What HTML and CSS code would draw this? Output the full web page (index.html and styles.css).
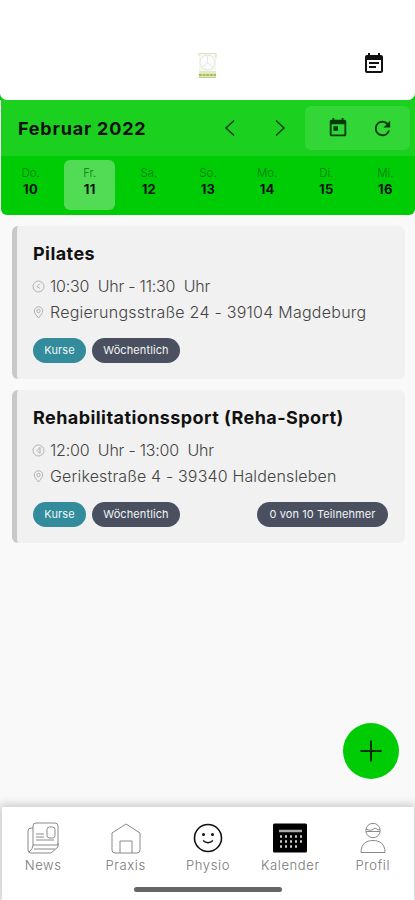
FILE: index.html
```html
<!DOCTYPE html>
<html lang="de">

<head>
    <meta charset="UTF-8">
    <meta name="viewport" content="width=device-width, initial-scale=1.0">
    <title>Kalender</title>
    <link rel="stylesheet" href="styles.css">
</head>

<body>
    <header class="top-bar">
        <svg class="logo" width="20" height="28" viewBox="0 0 20 28">
            <rect x="1" y="1" width="17" height="25" fill="#f7f8f2"/>
            <path d="M1 4V1.500H18V6" fill="none" stroke="#d8e1b8"/>
            <path d="M7 3.500H12" stroke="#9aa88b"/>
            <circle cx="9.500" cy="10.500" r="7.500" fill="#fcfcfc" stroke="#e4e4e0"/>
            <path d="M9.500 4V11L4 15M9.500 11L15 15" fill="none" stroke="#e6e6ec"/>
            <path d="M1 19H18V26H1Z" fill="#e1eac0"/>
            <path d="M1 23H18" stroke="#a5bd5c" stroke-width="2" stroke-dasharray="3 .6"/>
            <path d="M1 25.500H18" stroke="#bdcf83"/>
        </svg>
        <svg class="events-icon" width="24" height="24" viewBox="0 0 24 24">
            <path fill="#111" d="M17 10H7v2h10v-2zm2-7h-1V1h-2v2H8V1H6v2H5c-1.110 0-2 .9-2 2v14c0 1.100.89 2 2 2h14c1.100 0 2-.9 2-2V5c0-1.100-.9-2-2-2zm0 16H5V8h14v11zm-5-5H7v2h7v-2z"/>
        </svg>
    </header>

    <section class="calendar">
        <div class="month-row">
            <h1>Februar 2022</h1>
            <svg class="prev" width="12" height="18" viewBox="0 0 12 18"><path d="M10 1.500L2 9l8 7.500"/></svg>
            <svg class="next" width="12" height="18" viewBox="0 0 12 18"><path d="M2 1.500L10 9l-8 7.500"/></svg>
            <div class="tools">
                <svg width="22" height="22" viewBox="0 0 24 24"><path d="M19 3h-1V1h-2v2H8V1H6v2H5c-1.110 0-2 .9-2 2v14c0 1.100.89 2 2 2h14c1.100 0 2-.9 2-2V5c0-1.100-.9-2-2-2zm0 16H5V8h14v11zM7 10h5v5H7z"/></svg>
                <svg width="23" height="23" viewBox="0 0 24 24"><path d="M17.650 6.350A7.958 7.958 0 0 0 12 4a8 8 0 1 0 7.730 10h-2.080A6 6 0 1 1 12 6c1.660 0 3.140.69 4.220 1.780L13 11h7V4l-2.350 2.350z"/></svg>
            </div>
        </div>
        <div class="days">
            <div class="day"><span>Do.</span><b>10</b></div>
            <div class="day active"><span>Fr.</span><b>11</b></div>
            <div class="day"><span>Sa.</span><b>12</b></div>
            <div class="day"><span>So.</span><b>13</b></div>
            <div class="day"><span>Mo.</span><b>14</b></div>
            <div class="day"><span>Di.</span><b>15</b></div>
            <div class="day"><span>Mi.</span><b>16</b></div>
        </div>
    </section>

    <main>
        <article class="card">
            <h2>Pilates</h2>
            <p class="time">
                <svg width="13" height="13" viewBox="0 0 13 13"><circle cx="6.500" cy="6.500" r="5.500"/><path d="M8 3.500L5 6.500L8 8.500"/></svg>
                <span>10:30&nbsp; Uhr - 11:30&nbsp; Uhr</span>
            </p>
            <p class="place">
                <svg width="13" height="13" viewBox="0 0 13 13"><path d="M6.500 12C4 9 2.300 7 2.300 5a4.200 4.200 0 0 1 8.400 0c0 2-1.700 4-4.200 7z"/><circle cx="6.500" cy="5" r="1.700"/></svg>
                <span>Regierungsstraße 24 - 39104 Magdeburg</span>
            </p>
            <div class="tags">
                <span class="tag course">Kurse</span>
                <span class="tag weekly">Wöchentlich</span>
            </div>
        </article>

        <article class="card">
            <h2>Rehabilitationssport (Reha-Sport)</h2>
            <p class="time">
                <svg width="13" height="13" viewBox="0 0 13 13"><circle cx="6.500" cy="6.500" r="5.500"/><path d="M8 3V9.500L5 6.500L8 3.500"/></svg>
                <span>12:00&nbsp; Uhr - 13:00&nbsp; Uhr</span>
            </p>
            <p class="place narrow">
                <svg width="13" height="13" viewBox="0 0 13 13"><path d="M6.500 12C4 9 2.300 7 2.300 5a4.200 4.200 0 0 1 8.400 0c0 2-1.700 4-4.200 7z"/><circle cx="6.500" cy="5" r="1.700"/></svg>
                <span>Gerikestraße 4 - 39340 Haldensleben</span>
            </p>
            <div class="tags">
                <span class="tag course">Kurse</span>
                <span class="tag weekly">Wöchentlich</span>
                <span class="tag members">0 von 10 Teilnehmer</span>
            </div>
        </article>
    </main>

    <button class="add-btn" aria-label="Neu">
        <svg width="22" height="22" viewBox="0 0 22 22"><path d="M11 .5V21.500M.5 11H21.500"/></svg>
    </button>

    <nav class="bottom-nav">
        <a class="item">
            <svg width="34" height="34" viewBox="0 0 34 34">
                <path d="M7 24V5Q7 2 10 2H29Q32 2 32 5V24H7M7 7H5Q2 7 2 10V29Q2 32 5 32H25L32 26V22M7 24Q7 28 3 31M8 28H29"/>
                <rect x="21" y="6" width="8" height="11" rx="2.500"/>
                <path d="M10 13H18M10 16H18M10 19H28"/>
            </svg>
            <span>News</span>
        </a>
        <a class="item">
            <svg width="34" height="34" viewBox="0 0 34 34"><path d="M3 12L17 3l14 9V29Q31 32 28 32H6Q3 32 3 29zM11 32V20H23V32"/></svg>
            <span>Praxis</span>
        </a>
        <a class="item physio">
            <svg width="34" height="34" viewBox="0 0 34 34"><circle cx="17" cy="17" r="13.500"/><path d="M12 19.500Q17 24 22 19.500"/><circle class="eye" cx="12.500" cy="13.500" r="1.500"/><circle class="eye" cx="21.500" cy="13.500" r="1.500"/></svg>
            <span>Physio</span>
        </a>
        <a class="item kalender">
            <svg width="34" height="34" viewBox="0 0 34 34">
                <rect class="sheet" x="0" y="2.500" width="34" height="29" rx="1.500"/>
                <path class="bar" d="M6 10H29"/>
                <path class="dots" d="M7 15.500H29M7 20.500H29M7 25.500H24"/>
            </svg>
            <span>Kalender</span>
        </a>
        <a class="item">
            <svg width="34" height="34" viewBox="0 0 34 34"><circle cx="17" cy="9.500" r="7.200"/><path d="M10 8Q15 11 19 7Q21 9 24 9M10 10.500H24M5 31.500C5 23 10 19.500 17 19.500S29 23 29 31.500z"/></svg>
            <span>Profil</span>
        </a>
        <div class="home-indicator"></div>
    </nav>
</body>

</html>
```
FILE: styles.css
```css
* {
    box-sizing: border-box;
}

body {
    margin: 0;
    height: 900px;
    display: flex;
    flex-direction: column;
    position: relative;
    overflow: hidden;
    background-color: #f9f9f9;
    font-family: Inter, sans-serif;
    color: #111;
}

/* Header */
.top-bar {
    height: 100px;
    display: grid;
    grid-template-columns: 1fr 20px 1fr;
    padding: 52px 29px 0;
    background: linear-gradient(#fff, #fff) 0 0 / 100% 94px no-repeat, #00cc05;
    position: relative;
}

/* White sheet whose round corners let the green through */
.top-bar::before {
    content: "";
    position: absolute;
    inset: 0;
    background-color: #fff;
    border-radius: 0 0 7px 7px;
}

.logo,
.events-icon {
    position: relative;
}

.logo {
    grid-column: 2;
}

.events-icon {
    justify-self: end;
}

/* Calendar strip */
.calendar {
    height: 115px;
    margin: 0 0 0 1px;
    background-color: #00cc05;
    border-radius: 0 0 6px 6px;
    overflow: hidden;
}

.month-row {
    height: 56px;
    display: flex;
    align-items: center;
    padding: 0 5px 0 17px;
    background-color: #1bd01f;
}

h1 {
    margin: 0;
    width: 206px;
    font-size: 18px;
    font-weight: 700;
    letter-spacing: 0.8px;
}

.prev,
.next {
    fill: none;
    stroke: #063b07;
    stroke-width: 1.500;
}

.next {
    margin-left: 38px;
}

.tools {
    width: 105px;
    height: 44px;
    margin-left: auto;
    padding-left: 22px;
    display: flex;
    align-items: center;
    gap: 22px;
    border-radius: 6px;
    background-color: #32d636;
    fill: #063b07;
}

.days {
    display: grid;
    grid-template-columns: repeat(7, 1fr);
    justify-items: center;
    padding-top: 4px;
}

.day {
    width: 51px;
    height: 50px;
    padding-top: 6px;
    display: flex;
    flex-direction: column;
    align-items: center;
    border-radius: 6px;
    font-size: 11.5px;
    line-height: 15px;
}

.day span {
    font-weight: 300;
    color: #087a0b;
}

.day b {
    font-size: 13px;
    line-height: 16px;
    letter-spacing: 0.3px;
}

.day.active {
    background-color: #52dc55;
}

/* Course cards */
main {
    padding: 11px 10px 0 12px;
    display: flex;
    flex-direction: column;
    gap: 11px;
}

.card {
    height: 153px;
    padding: 16px 17px 0 16px;
    border-left: 5px solid #c8c8c8;
    border-radius: 6px;
    background-color: #f1f1f1;
}

h2 {
    margin: 0 0 9px;
    font-size: 18px;
    line-height: 24px;
    font-weight: 700;
    white-space: nowrap;
    letter-spacing: 0.43px;
}

.card p {
    display: flex;
    align-items: center;
    gap: 4px;
    margin: 0 0 4px;
    font-size: 16px;
    line-height: 22px;
    font-weight: 300;
    color: #444;
    white-space: nowrap;
}

.card .time {
    letter-spacing: -0.22px;
}

.card .place {
    letter-spacing: 0.25px;
}

.card .narrow {
    letter-spacing: 0.15px;
}

.card p svg {
    flex: none;
    margin-left: -1px;
    margin-right: 1px;
    fill: none;
    stroke: #aaa;
    stroke-width: 0.900;
}

.tags {
    display: flex;
    gap: 6px;
    margin-top: 15px;
}

.tag {
    height: 25px;
    border-radius: 13px;
    text-align: center;
    font-size: 11px;
    line-height: 25px;
    letter-spacing: 0.1px;
    color: #f1f5f6;
    background-color: #4a5060;
}

.course {
    width: 53px;
    background-color: #328c9c;
}

.weekly {
    width: 88px;
}

.members {
    width: 131px;
    margin-left: auto;
}

/* Floating action */
.add-btn {
    position: absolute;
    left: 343px;
    top: 723px;
    width: 56px;
    height: 56px;
    padding: 0;
    display: grid;
    place-items: center;
    border: none;
    border-radius: 50%;
    background-color: #00cc05;
}

.add-btn path {
    stroke: #072c08;
    stroke-width: 2;
}

/* Bottom navigation */
.bottom-nav {
    height: 93px;
    margin: auto 1px 0 2px;
    padding-top: 14px;
    display: grid;
    grid-template-columns: repeat(5, 1fr);
    align-content: start;
    position: relative;
    background-color: #fff;
    box-shadow: 0 0 9px 2px #c4c4c4;
}

.item {
    display: flex;
    flex-direction: column;
    align-items: center;
    font-size: 13px;
    line-height: 17px;
    font-weight: 300;
    letter-spacing: 0.6px;
    color: #777;
}

.item svg {
    margin-bottom: 2px;
    fill: none;
    stroke: #8a8a8a;
    stroke-width: 1;
}

.physio svg {
    stroke: #111;
    stroke-width: 1.600;
}

.item .eye {
    fill: #111;
    stroke: none;
}

.kalender .sheet {
    fill: #000;
    stroke: none;
}

.bar {
    stroke: #aaa;
    stroke-width: 2.500;
}

.dots {
    stroke: #ccc;
    stroke-width: 2.500;
    stroke-dasharray: 2 3;
}

.home-indicator {
    position: absolute;
    left: 132px;
    top: 80px;
    width: 148px;
    height: 5px;
    border-radius: 3px;
    background-color: #666;
}
```
